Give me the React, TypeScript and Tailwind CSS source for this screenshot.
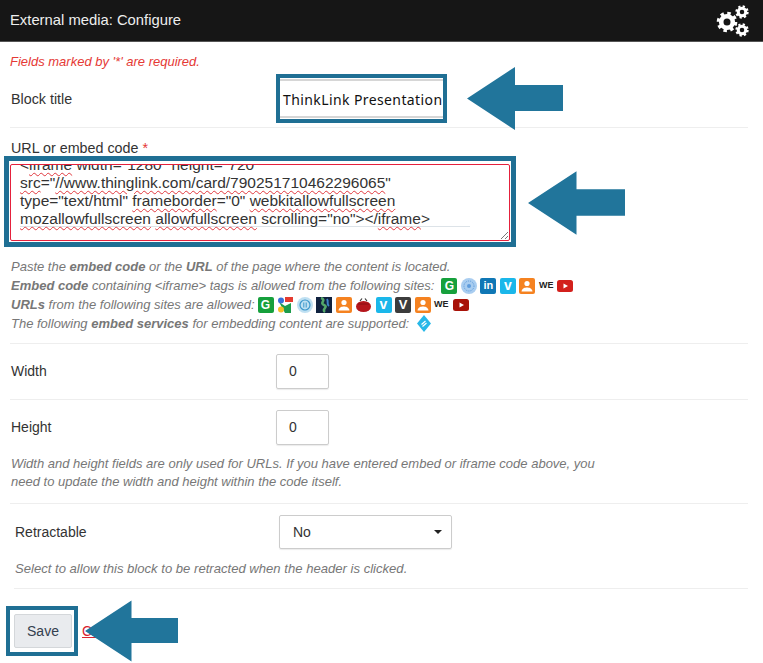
import React from 'react';

const Squiggle = ({ children }: { children: React.ReactNode }) => (
  <span className="underline decoration-wavy decoration-[#e0383e] decoration-1 underline-offset-2">{children}</span>
);

// teal arrow laid over the form, points left
function Arrow({ className }: { className: string }) {
  return (
    <svg className={`absolute ${className}`} viewBox="0 0 96 63">
      <path d="M0 31.5 L48 0 V18 H96 V44 H48 V63 Z" fill="#21759b" />
    </svg>
  );
}

function Gear({ cx, cy, r }: { cx: number; cy: number; r: number }) {
  const teeth = Math.PI * 2 * r * 0.86 / 16;
  return (
    <g fill="none" stroke="#fff">
      <circle cx={cx} cy={cy} r={r * 0.86} strokeWidth={r * 0.34} strokeDasharray={`${teeth} ${teeth}`} />
      <circle cx={cx} cy={cy} r={r * 0.58} strokeWidth={r * 0.46} />
    </g>
  );
}

const tile = 'flex h-4 w-4 shrink-0 items-center justify-center rounded-[2px] not-italic font-bold text-white';

const Glogo = () => <span className={`${tile} bg-[#16a03c] text-[12px]`}>G</span>;
const Vimeo = () => <span className={`${tile} bg-[#1ab7ea] text-[14px]`}>v</span>;
const LinkedIn = () => <span className={`${tile} bg-[#0f77b5] text-[11px]`}>in</span>;
const We = () => <span className="w-[15px] shrink-0 text-[9px] font-bold not-italic text-[#222]">WE</span>;

function Person() {
  return (
    <span className={`${tile} bg-[#f58220]`}>
      <svg viewBox="0 0 16 16" className="h-4 w-4">
        <circle cx="8" cy="5.5" r="2.6" fill="#fff" />
        <path d="M2.5 13.5 C3 10 6 9.5 8 9.5 C10 9.5 13 10 13.5 13.5 Z" fill="#fff" />
      </svg>
    </span>
  );
}

function YouTube({ dark }: { dark?: boolean }) {
  return (
    <svg viewBox="0 0 16 12" className="h-3 w-4 shrink-0">
      <rect width="16" height="12" rx="2.5" fill={dark ? '#a81208' : '#d3201c'} />
      <path d="M6.5 3.5 L11 6 L6.5 8.500 Z" fill="#fff" />
    </svg>
  );
}

function Globe() {
  return (
    <svg viewBox="0 0 16 16" className="h-4 w-4 shrink-0">
      <circle cx="8" cy="8" r="8" fill="#a9cdf0" />
      <circle cx="8" cy="8" r="5" fill="none" stroke="#5d9bdc" strokeWidth="1" strokeDasharray="1 1" />
      <circle cx="8" cy="8" r="2" fill="#5d9bdc" />
    </svg>
  );
}

function GoogleMaps() {
  return (
    <svg viewBox="0 0 16 16" className="h-4 w-4 shrink-0">
      <rect x="8" width="8" height="5" fill="#e53b30" />
      <path d="M2 5 L8 9 L14 6 V16 H8 Z" fill="#1d9d4c" />
      <circle cx="4" cy="3.500" r="3" fill="#3a6fd8" />
      <circle cx="4" cy="12.500" r="3" fill="#f6c026" />
    </svg>
  );
}

function Rings() {
  return (
    <svg viewBox="0 0 16 16" className="h-4 w-4 shrink-0">
      <circle cx="8" cy="8" r="8" fill="#bfe0f2" />
      <circle cx="8" cy="8" r="5" fill="none" stroke="#3d97cc" strokeWidth="1.2" />
      <path d="M6.800 5.500 V10.500 M9.200 5.500 V10.500" stroke="#3d97cc" strokeWidth="1" />
    </svg>
  );
}

function DarkMap() {
  return (
    <svg viewBox="0 0 16 16" className="h-4 w-4 shrink-0">
      <rect width="16" height="16" fill="#10223f" />
      <path d="M5 1 C11 3 3 6 8 8 C13 10 5 12 9 15" fill="none" stroke="#54a86a" strokeWidth="2.500" />
      <path d="M11 2 C13 5 10 7 13 9" fill="none" stroke="#3f83c9" strokeWidth="2" />
    </svg>
  );
}

function Apple() {
  return (
    <svg viewBox="0 0 17 16" className="h-4 w-[17px] shrink-0">
      <ellipse cx="8.500" cy="9.500" rx="7.500" ry="5.500" fill="#b5161c" />
      <path d="M5 4 L7 1.500 M12 4 L10 1.500" stroke="#333" strokeWidth="1.200" />
      <path d="M3 7 H14" stroke="#7d0d12" strokeWidth="0.800" />
    </svg>
  );
}

const DarkV = () => <span className={`${tile} bg-[#3c3c3c] text-[13px] text-[#f5c518]`}>V</span>;

function Diamond() {
  return (
    <svg viewBox="0 0 14 17" className="h-[17px] w-[14px] shrink-0">
      <path d="M7 0 L14 8.500 L7 17 L0 8.500 Z" fill="#27b8e8" />
      <path d="M4.500 9.500 L8.500 6 M5.500 11.500 L9.500 8" stroke="#fff" strokeWidth="1.200" />
    </svg>
  );
}

function HelpLine({ children }: { children: React.ReactNode }) {
  return <div className="flex h-[19px] items-center whitespace-pre">{children}</div>;
}

export default function App() {
  return (
    <div className="relative h-[663px] w-[763px] overflow-hidden bg-white font-['Liberation_Sans',Arial,sans-serif] text-[14px] text-[#333]">
      {/* Header */}
      <div className="flex h-[42px] items-center justify-between border-b border-[#555] bg-[#161616] pl-[10px]">
        <span className="text-[14.800px] text-[#eee]">External media: Configure</span>
        <svg width="40" height="36" viewBox="0 0 40 36" className="mr-[10px]">
          <Gear cx={14} cy={19} r={10} />
          <Gear cx={29} cy={9} r={6.500} />
          <Gear cx={29} cy={27} r={6.500} />
        </svg>
      </div>

      <div className="w-[748px] pl-[10px]">
        <div className="pt-[12px] pb-[4px] text-[13px] leading-4 italic text-[#e53935]">
          Fields marked by '*' are required.
        </div>

        {/* Block title */}
        <div className="flex items-center border-b border-[#eee] pb-[4px]">
          <label className="w-[266px] pt-[2px] pl-[1px] text-[14.300px]">Block title</label>
          <div className="flex h-[49px] w-[171px] items-center border-[4px] border-[#1f6f94] bg-white py-[1px]">
            <div className="flex h-full w-full items-center border-y-2 border-[#d6d6d6] pt-[2px] pl-[3px] font-['Noto_Sans',sans-serif] text-[14px] tracking-[0.4px] whitespace-nowrap text-[#111]">
              ThinkLink Presentation
            </div>
          </div>
        </div>

        {/* URL or embed code */}
        <div className="mt-[10px] h-[18px] pl-[1px] text-[14.300px] leading-[20px]">
          URL or embed code <span className="text-[#e53935]">*</span>
        </div>
        <div className="ml-[-6px] h-[91px] w-[512px] border-[5px] border-[#1f6f94] bg-white px-[1px] pt-[3px] pb-[1px]">
          <div className="relative h-full overflow-hidden rounded-[2px] border border-[#e5213c] pl-[9px] text-[15.500px] leading-[18px] text-[#333]">
            <div className="mt-[-9px] whitespace-pre">
              <div>&lt;<Squiggle>iframe</Squiggle> width="1280" height="720"</div>
              <div><Squiggle>src</Squiggle>="<Squiggle>//www.thinglink.com/card/790251710462296065</Squiggle>"</div>
              <div>type="text/html" <Squiggle>frameborder</Squiggle>="0" <Squiggle>webkitallowfullscreen</Squiggle></div>
              <div><Squiggle>mozallowfullscreen</Squiggle> <Squiggle>allowfullscreen</Squiggle> scrolling="no"&gt;&lt;/<Squiggle>iframe</Squiggle>&gt;</div>
            </div>
            <div className="mt-[-2px] h-px w-[450px] bg-[#dde3e8]" />
            <svg width="9" height="9" viewBox="0 0 9 9" className="absolute right-0 bottom-0">
              <path d="M1 8 L8 1 M5 8 L8 5" stroke="#777" strokeWidth="1" />
            </svg>
          </div>
        </div>

        {/* Help text */}
        <div className="mt-[10px] border-b border-[#eee] pb-[10px] pl-[1px] text-[13px] italic text-[#777]">
          <HelpLine>
            Paste the <b>embed code</b> or the <b>URL</b> of the page where the content is located.
          </HelpLine>
          <HelpLine>
            <b>Embed code</b> containing &lt;iframe&gt; tags is allowed from the following sites:
            <span className="ml-[7px] flex items-center gap-[3.500px]">
              <Glogo /><Globe /><LinkedIn /><Vimeo /><Person /><We /><YouTube />
            </span>
          </HelpLine>
          <HelpLine>
            <b>URLs</b> from the following sites are allowed:
            <span className="ml-[3px] flex items-center gap-[3.500px]">
              <Glogo /><GoogleMaps /><Rings /><DarkMap /><Person /><Apple /><Vimeo /><DarkV /><Person /><We /><YouTube dark />
            </span>
          </HelpLine>
          <HelpLine>
            The following <b>embed services</b> for embedding content are supported:
            <span className="ml-[8px] flex items-center"><Diamond /></span>
          </HelpLine>
        </div>

        {/* Width */}
        <div className="flex items-center border-b border-[#eee] py-[10px]">
          <label className="w-[266px] pl-[1px]">Width</label>
          <div className="flex h-[35px] w-[53px] items-center rounded-[2px] border border-[#ccc] pl-[12px] shadow-[0_1px_1px_rgba(0,0,0,0.08)]">0</div>
        </div>

        {/* Height */}
        <div className="flex items-center py-[10px]">
          <label className="w-[266px] pl-[1px]">Height</label>
          <div className="flex h-[35px] w-[53px] items-center rounded-[2px] border border-[#ccc] pl-[12px] shadow-[0_1px_1px_rgba(0,0,0,0.08)]">0</div>
        </div>
        <div className="border-b border-[#eee] pb-[12px] pl-[1px] text-[13px] leading-[18px] italic text-[#777]">
          Width and height fields are only used for URLs. If you have entered embed or iframe code above, you<br />
          need to update the width and height within the code itself.
        </div>

        {/* Retractable */}
        <div className="ml-[4px] border-b border-[#eee] pb-[10px]">
          <div className="flex items-center pt-[11px]">
            <label className="ml-[1px] w-[264px]">Retractable</label>
            <div className="flex h-[34px] w-[173px] items-center justify-between rounded-[2px] border border-[#ccc] pr-[9px] pl-[13px] shadow-[0_1px_1px_rgba(0,0,0,0.08)]">
              No
              <span className="h-0 w-0 border-x-[4px] border-t-[4px] border-x-transparent border-t-[#222]" />
            </div>
          </div>
          <div className="mt-[11px] ml-[1px] text-[13.100px] leading-[18px] italic text-[#777]">
            Select to allow this block to be retracted when the header is clicked.
          </div>
        </div>

        {/* Actions */}
        <div className="mt-[17px] ml-[-4px] flex items-center">
          <div className="h-[50px] w-[72px] border-[4px] border-[#1f6f94] p-[4px]">
            <button className="h-[34px] w-[58px] rounded-[2px] border border-[#d4d7da] bg-[#e9ebee] text-[#34404f]">Save</button>
          </div>
          <a className="ml-[4px] text-[#d9232e] underline">Cancel</a>
        </div>
      </div>

      {/* Arrows */}
      <Arrow className="top-[67px] left-[467px] h-[63px] w-[96px]" />
      <Arrow className="top-[171px] left-[528px] h-[64px] w-[97px]" />
      <Arrow className="top-[600px] left-[85px] h-[62px] w-[93px]" />
    </div>
  );
}
